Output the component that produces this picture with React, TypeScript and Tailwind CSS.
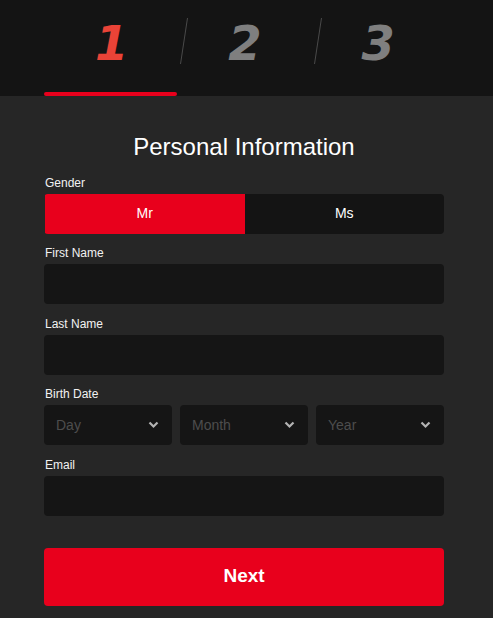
import React from "react";

const font = { fontFamily: '"DejaVu Sans", Tahoma, sans-serif' };

function Label({ children }: { children: React.ReactNode }) {
  return (
    <div className="mt-[11.5px] mb-[3px] h-4 pl-[1px] text-[12px] leading-4 text-[#f2f2f2] [font-family:'Liberation_Sans',sans-serif]">
      {children}
    </div>
  );
}

function Input() {
  return <div className="h-10 w-full rounded-[4px] bg-[#151515]" />;
}

function Chevron() {
  return (
    <svg width="11" height="8" viewBox="0 0 11 8" className="shrink-0">
      <path d="M1.5 1.5 L5.5 5.5 L9.5 1.5" fill="none" stroke="#b3b3b3" strokeWidth="2.2" />
    </svg>
  );
}

function Select({ text }: { text: string }) {
  return (
    <div className="flex h-10 flex-1 items-center justify-between rounded-[4px] bg-[#151515] pl-3 pr-[13px]">
      <span className="text-[14px] text-[#4d4d4d] [font-family:'Liberation_Sans',sans-serif]">{text}</span>
      <Chevron />
    </div>
  );
}

function Sep() {
  return (
    <div className="relative z-10 ml-[3px] -mr-[11px] mt-[18px] h-[46px] w-2 self-start">
      <svg width="8" height="46" viewBox="0 0 8 46">
        <line x1="7.5" y1="0" x2="0.5" y2="46" stroke="#4a4a4a" strokeWidth="1" />
      </svg>
    </div>
  );
}

function Step({ n, active }: { n: string; active?: boolean }) {
  return (
    <div className="flex h-full w-[133.3px] flex-col">
      <div
        className={`flex flex-1 items-center justify-center pb-[7px] pl-[2px] text-[48px] font-bold italic leading-none ${
          active ? "text-[#ea4337]" : "text-[#7f7f7f]"
        }`}
        style={font}
      >
        {n}
      </div>
      <div className={`h-1 rounded-full ${active ? "bg-[#e8001c]" : ""}`} />
    </div>
  );
}

export default function App() {
  return (
    <div className="min-h-[618px] w-[493px] bg-[#262626]">
      <div className="flex h-24 justify-start bg-[#141414] px-[44px]">
        <Step n="1" active />
        <Sep />
        <Step n="2" />
        <Sep />
        <Step n="3" />
      </div>
      <div className="mx-[44px] w-[400px] pt-[35px]">
        <h1 className="mb-[1.5px] h-8 text-center text-[24px] leading-8 text-white [font-family:'Liberation_Sans',sans-serif]">
          Personal Information
        </h1>
        <Label>Gender</Label>
        <div className="flex h-10 overflow-hidden rounded-[4px] pl-[1px] text-[14px] text-white [font-family:'Liberation_Sans',sans-serif]">
          <div className="flex flex-1 items-center justify-center bg-[#e8001c]">Mr</div>
          <div className="flex flex-1 items-center justify-center bg-[#141414]">Ms</div>
        </div>
        <Label>First Name</Label>
        <Input />
        <Label>Last Name</Label>
        <Input />
        <Label>Birth Date</Label>
        <div className="flex gap-2">
          <Select text="Day" />
          <Select text="Month" />
          <Select text="Year" />
        </div>
        <Label>Email</Label>
        <Input />
        <button className="mt-[32px] flex h-[58px] w-full items-center justify-center rounded-[4px] bg-[#e8001c] text-[19px] font-bold text-white [font-family:'Liberation_Sans',sans-serif]">
          Next
        </button>
      </div>
    </div>
  );
}
